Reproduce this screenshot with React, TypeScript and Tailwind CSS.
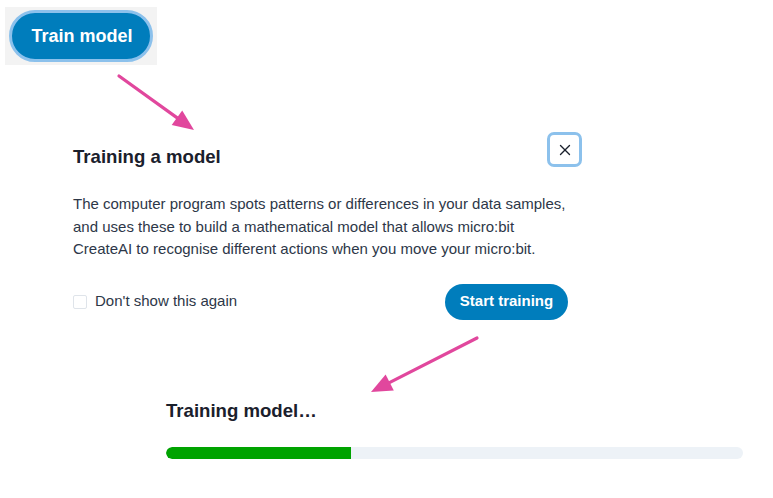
import { X } from 'lucide-react';

function Arrow({ x1, y1, x2, y2 }: { x1: number; y1: number; x2: number; y2: number }) {
    // line with a filled triangle head at (x2, y2)
    const dx = x2 - x1;
    const dy = y2 - y1;
    const len = Math.hypot(dx, dy);
    const ux = dx / len;
    const uy = dy / len;
    const head = 21;
    const half = 9;
    const bx = x2 - ux * head;
    const by = y2 - uy * head;
    const pts = `${x2},${y2} ${bx - uy * half},${by + ux * half} ${bx + uy * half},${by - ux * half}`;
    return (
        <svg className="absolute left-0 top-0 pointer-events-none" width={773} height={498}>
            <line x1={x1} y1={y1} x2={bx + ux * 2} y2={by + uy * 2} stroke="#e1479d" strokeWidth={3.2} strokeLinecap="round" />
            <polygon points={pts} fill="#e1479d" />
        </svg>
    );
}

export default function App() {
    return (
        <div
            className="relative w-[773px] h-[498px] bg-white overflow-hidden text-[#1a202c]"
            style={{ fontFamily: '"Liberation Sans", Arial, sans-serif' }}
        >
            {/* top snippet: train button */}
            <div className="ml-[5px] mt-[7px] w-[152px] h-[58px] bg-[#f3f3f3] flex items-center justify-center">
                <button className="w-[144px] h-[52px] pl-[2px] rounded-full bg-[#007dbc] border-[3px] border-[#8cc1ec] text-white font-bold text-[18px]">
                    Train model
                </button>
            </div>

            {/* dialog */}
            <div className="ml-[73px] mt-[67px] w-[509px]">
                <div className="flex justify-between items-start">
                    <h2 className="mt-[14px] text-[18.6px] font-bold leading-[22px] text-[#1a202c]">Training a model</h2>
                    <button className="w-[35px] h-[35px] rounded-[7px] border-[3px] border-[#8cc1ec] flex items-center justify-center text-[#1a202c]">
                        <X size={18} strokeWidth={1.8} />
                    </button>
                </div>
                <p className="mt-[25px] w-[500px] text-[15px] leading-[22.5px] text-[#2d3748]">
                    The computer program spots patterns or differences in your data samples, and uses these to build a mathematical model that allows micro:bit CreateAI to recognise different actions when you move your micro:bit.
                </p>
                <div className="mt-[23px] w-[495px] flex items-center justify-between">
                    <label className="flex items-center gap-[8px] text-[15px] text-[#2d3748]">
                        <span className="w-[14px] h-[14px] rounded-[2px] border border-[#dfe4ea] bg-white" />
                        Don't show this again
                    </label>
                    <button className="w-[123px] h-[36px] rounded-full bg-[#007dbc] text-white font-bold text-[15px]">
                        Start training
                    </button>
                </div>
            </div>

            {/* training progress */}
            <div className="ml-[166px] mt-[80px] w-[577px]">
                <h3 className="text-[18.6px] font-bold leading-[22px] text-[#1a202c]">Training model…</h3>
                <div className="mt-[25px] h-[12px] rounded-full bg-[#edf2f7] overflow-hidden">
                    <div className="h-full w-[185px] bg-[#00a300] rounded-l-full" />
                </div>
            </div>

            <Arrow x1={119} y1={76} x2={194} y2={130} />
            <Arrow x1={477} y1={338} x2={371} y2={392} />
        </div>
    );
}
